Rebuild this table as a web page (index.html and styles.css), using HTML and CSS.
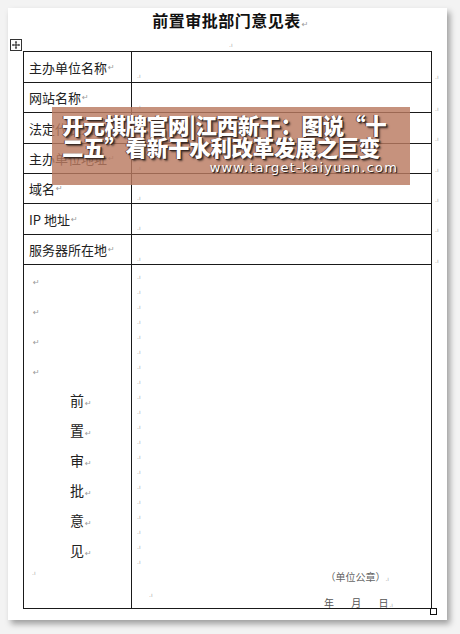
FILE: index.html
```html
<!DOCTYPE html>
<html lang="zh">
<head>
<meta charset="utf-8">
<link rel="stylesheet" href="styles.css">
</head>
<body>
<div class="paper">
  <div class="title">前置审批部门意见表<span class="ret">↵</span></div>
  <div class="handle-row">
    <svg class="handle" width="12" height="12" viewBox="0 0 12 12">
      <rect x="0.5" y="0.5" width="11" height="11" fill="#fff" stroke="#333"/>
      <path d="M6 2.5V9.5M2.5 6H9.5" stroke="#222" stroke-width="1"/>
      <path d="M6 2L4.8 3.4H7.2Z M6 10L4.8 8.6H7.2Z M2 6L3.4 4.8V7.2Z M10 6L8.6 4.8V7.2Z" fill="#222"/>
    </svg>
    <span class="mark top-mark">.ı</span>
  </div>
  <div class="form">
    <div class="lab first">主办单位名称<span class="ret">↵</span></div><div class="val first"><span class="mark">.ı</span></div><div class="end"><span class="mark">.ı</span></div>
    <div class="lab">网站名称<span class="ret">↵</span></div><div class="val"><span class="mark">.ı</span></div><div class="end"><span class="mark">.ı</span></div>
    <div class="lab">法定代表人<span class="ret">↵</span></div><div class="val"><span class="mark">.ı</span></div><div class="end"><span class="mark">.ı</span></div>
    <div class="lab">主办单位地址<span class="ret">↵</span></div><div class="val"><span class="mark">.ı</span></div><div class="end"><span class="mark">.ı</span></div>
    <div class="lab">域名<span class="ret">↵</span></div><div class="val"><span class="mark">.ı</span></div><div class="end"><span class="mark">.ı</span></div>
    <div class="lab">IP 地址<span class="ret">↵</span></div><div class="val"><span class="mark">.ı</span></div><div class="end"><span class="mark">.ı</span></div>
    <div class="lab">服务器所在地<span class="ret">↵</span></div><div class="val"><span class="mark">.ı</span></div><div class="end"><span class="mark">.ı</span></div>
    <div class="lab big-lab">
      <div class="bl ret-line"><span class="ret">↵</span></div>
      <div class="bl ret-line"><span class="ret">↵</span></div>
      <div class="bl ret-line"><span class="ret">↵</span></div>
      <div class="bl ret-line"><span class="ret">↵</span></div>
      <div class="bl ch">前<span class="ret">↵</span></div>
      <div class="bl ch">置<span class="ret">↵</span></div>
      <div class="bl ch">审<span class="ret">↵</span></div>
      <div class="bl ch">批<span class="ret">↵</span></div>
      <div class="bl ch">意<span class="ret">↵</span></div>
      <div class="bl ch">见<span class="ret">↵</span></div>
      <div class="bl-last"><span class="mark">.ı</span></div>
    </div>
    <div class="val big-val">
      <div class="marks">
        <span class="mark">.ı</span><span class="mark">.ı</span><span class="mark">.ı</span><span class="mark">.ı</span><span class="mark">.ı</span>
        <span class="mark">.ı</span><span class="mark">.ı</span><span class="mark">.ı</span><span class="mark">.ı</span><span class="mark">.ı</span>
        <span class="mark">.ı</span><span class="mark">.ı</span><span class="mark">.ı</span><span class="mark">.ı</span><span class="mark">.ı</span>
        <span class="mark">.ı</span><span class="mark">.ı</span><span class="mark">.ı</span><span class="mark">.ı</span><span class="mark">.ı</span>
      </div>
      <div class="stamp">（单位公章）<span class="mark">.ı</span></div>
      <div class="mid"><span class="mark">.ı</span></div>
      <div class="date">年 月 日<span class="mark">.ı</span></div>
    </div>
    <div class="end"></div>
  </div>
  <span class="corner"></span>
  <div class="overlay">
    <div class="ov-title">开元棋牌官网|江西新干：图说“十<br>二五”看新干水利改革发展之巨变</div>
    <div class="ov-url">www.target-kaiyuan.com</div>
  </div>
</div>
</body>
</html>
```

FILE: styles.css
```css
html, body {
  margin: 0;
  padding: 0;
}
body {
  background: #f3f3f3;
  width: 460px;
  height: 634px;
  overflow: hidden;
  font-family: "Noto Sans CJK SC", "Noto Sans", sans-serif;
}
.paper {
  position: relative;
  margin: 8px 0 0 8px;
  width: 439px;
  height: 612px;
  background: #fff;
  box-shadow: 3px 4px 6px rgba(0, 0, 0, 0.35);
}
.title {
  height: 24px;
  line-height: 24px;
  text-align: center;
  font-size: 16px;
  font-weight: 700;
  color: #111;
  letter-spacing: 0.5px;
  padding-left: 6px;
}
.ret {
  font-family: "DejaVu Sans", sans-serif;
  font-size: 8px;
  color: #999;
  font-weight: 400;
  margin-left: 1px;
}
.handle-row {
  height: 19px;
  display: flex;
  align-items: flex-end;
  padding-left: 2px;
}
.handle {
  display: block;
}
.mark {
  font-family: "DejaVu Sans", sans-serif;
  font-size: 6px;
  color: #aaa;
  line-height: 1;
}
.top-mark {
  margin-left: 207px;
  margin-bottom: 3px;
}
.form {
  display: grid;
  grid-template-columns: 109px 300px 20px;
  grid-template-rows: 32px 30px 31px 30px 30px 31px 30px 344px;
  margin-left: 15px;
}
.form > div {
  box-sizing: border-box;
}
.lab {
  border-left: 1px solid #1a1a1a;
  border-right: 1px solid #1a1a1a;
  border-bottom: 1px solid #1a1a1a;
  padding-left: 5px;
  font-size: 13px;
  color: #222;
  display: flex;
  align-items: center;
  white-space: nowrap;
}
.val {
  border-right: 1px solid #1a1a1a;
  border-bottom: 1px solid #1a1a1a;
  padding: 7px 0 0 5px;
}
.first {
  border-top: 1px solid #1a1a1a;
}
.end {
  padding: 9px 0 0 3px;
}
.big-lab {
  display: block;
  padding-left: 0;
}
.bl {
  height: 30px;
  line-height: 30px;
}
.ret-line {
  padding-left: 8px;
}
.ch {
  padding-left: 46px;
  font-size: 14px;
  color: #222;
}
.bl-last {
  padding-left: 8px;
  line-height: 10px;
  padding-top: 0;
}
.big-val {
  padding: 4px 0 0 5px;
}
.marks {
  display: flex;
  flex-direction: column;
}
.marks .mark {
  height: 15px;
  line-height: 15px;
}
.stamp {
  height: 14px;
  line-height: 14px;
  font-size: 10px;
  color: #666;
  text-align: right;
  padding-right: 42px;
  margin-top: 1px;
}
.mid {
  height: 12px;
  line-height: 12px;
  padding-left: 12px;
}
.date {
  height: 14px;
  line-height: 14px;
  font-size: 10px;
  color: #555;
  text-align: right;
  padding-right: 38px;
  word-spacing: 15px;
}
.date .mark {
  margin-left: 1px;
}
.corner {
  position: absolute;
  left: 422px;
  top: 600px;
  width: 5px;
  height: 5px;
  border: 1px solid #111;
  background: #fff;
}
.overlay {
  position: absolute;
  left: 44px;
  top: 99px;
  width: 358px;
  height: 78px;
  background: rgba(186, 122, 96, 0.82);
  box-sizing: border-box;
  padding: 7px 0 0 10px;
}
.ov-title {
  font-family: "Noto Sans CJK SC", sans-serif;
  font-weight: 900;
  font-size: 21.5px;
  line-height: 22px;
  color: #fff;
  letter-spacing: -0.3px;
  white-space: nowrap;
  text-shadow: 1px 1px 0 #3a2a25, -1px 0 0 #6a4a40, 2px 2px 2px rgba(0, 0, 0, 0.6);
}
.ov-url {
  font-family: "DejaVu Sans", sans-serif;
  font-size: 13px;
  line-height: 16px;
  color: #fff;
  text-align: right;
  padding-right: 12px;
  margin-top: 2px;
  letter-spacing: 1.2px;
  text-shadow: 1px 1px 0 #3a2a25, 1px 1px 2px rgba(0, 0, 0, 0.6);
}
```
